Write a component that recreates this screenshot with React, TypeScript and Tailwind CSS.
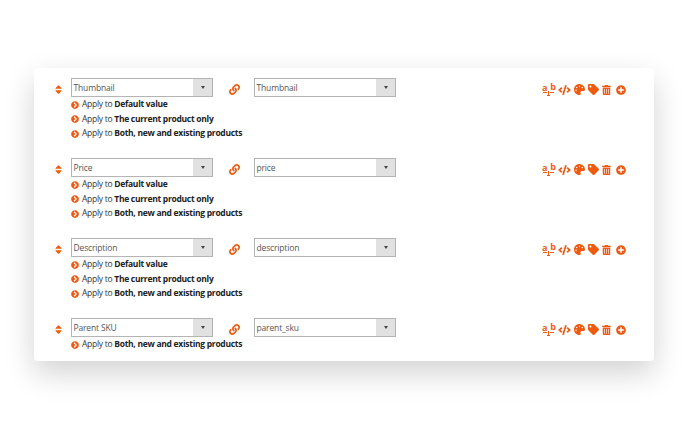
import React from 'react';
import {
  FaChevronCircleRight,
  FaCode,
  FaLink,
  FaPalette,
  FaPlusCircle,
  FaSort,
  FaTag,
  FaTrashAlt,
} from 'react-icons/fa';

const orange = 'text-[#ee5a12]';

const RenameIcon = () => (
  <span className={`relative block h-[13px] w-[13px] shrink-0 font-bold ${orange}`}>
    <span className="absolute left-0 top-[-1px] text-[9px] leading-[12px]">a</span>
    <span className="absolute right-[-1px] top-[-2px] text-[9px] leading-[12px]">b</span>
    <svg viewBox="0 0 13 13" className="absolute inset-0 h-[13px] w-[13px]" fill="none" stroke="currentColor" strokeWidth="1">
      <path d="M1 9.5h4M6.5 8v4.5M5 12.5h3M8 9.5h4" />
    </svg>
  </span>
);

const Select = ({ value }: { value: string }) => (
  <div className="flex h-[19px] w-[142px] items-stretch border border-[#b4b4b4] bg-white">
    <span className="flex-1 pl-[1.5px] text-[8.5px] leading-[17px] tracking-[-0.15px] text-[#555]">{value}</span>
    <span className="flex w-[19px] items-center justify-center bg-[#e1e1e1]">
      <span className="h-0 w-0 border-x-[2.5px] border-t-[3px] border-x-transparent border-t-[#444]" />
    </span>
  </div>
);

const Row = ({ left, right, options }: { left: string; right: string; options: string[] }) => (
  <div className="flex h-[80px] items-start">
    <FaSort className={`ml-[21px] mt-[6px] h-[11px] w-[7px] shrink-0 ${orange}`} />
    <div className="ml-[9px] flex w-[142px] shrink-0 flex-col">
      <Select value={left} />
      <div className="mt-[0.5px] flex flex-col">
        {options.map((o) => (
          <div key={o} className="flex h-[14.5px] items-center gap-[3px] text-[8.5px] tracking-[-0.28px] text-[#333]">
            <FaChevronCircleRight className={`h-[8px] w-[8px] shrink-0 ${orange}`} />
            <span className="whitespace-nowrap">
              Apply to <b className="font-bold text-[#222]">{o}</b>
            </span>
          </div>
        ))}
      </div>
    </div>
    <FaLink className={`ml-[16px] mt-[6px] h-[11px] w-[11px] shrink-0 ${orange}`} />
    <div className="ml-[14px] shrink-0">
      <Select value={right} />
    </div>
    <div className={`ml-[146px] mt-[5px] flex items-center gap-[3px] ${orange}`}>
      <RenameIcon />
      <FaCode className="h-[10px] w-[13px]" />
      <FaPalette className="h-[11px] w-[11px]" />
      <FaTag className="h-[11px] w-[11px]" />
      <FaTrashAlt className="h-[10px] w-[9px]" />
      <FaPlusCircle className="ml-[2px] h-[10px] w-[10px]" />
    </div>
  </div>
);

const allOptions = ['Default value', 'The current product only', 'Both, new and existing products'];

export default function App() {
  return (
    <div className="h-[430px] w-[688px] overflow-hidden bg-white pl-[34px] pt-[68px] font-['Open_Sans',sans-serif]">
      <div className="h-[293px] w-[620px] rounded-[4px] bg-white pt-[10px] shadow-[0_12px_30px_rgba(0,0,0,0.18)]">
        <Row left="Thumbnail" right="Thumbnail" options={allOptions} />
        <Row left="Price" right="price" options={allOptions} />
        <Row left="Description" right="description" options={allOptions} />
        <Row left="Parent SKU" right="parent_sku" options={[allOptions[2]]} />
      </div>
    </div>
  );
}
